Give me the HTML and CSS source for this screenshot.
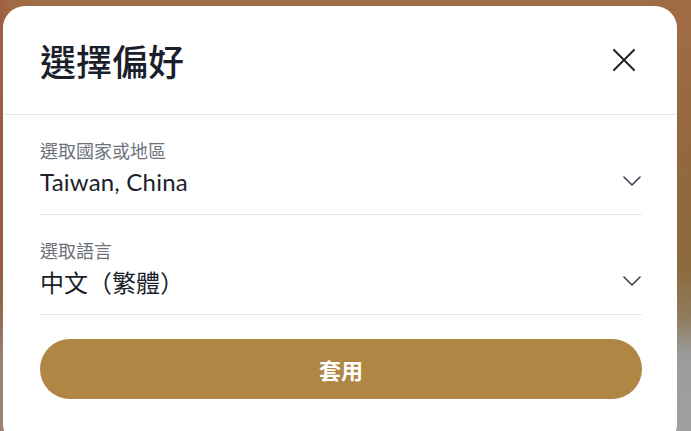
FILE: index.html
```html
<!DOCTYPE html>
<html lang="zh-Hant">
<head>
<meta charset="utf-8">
<title>選擇偏好</title>
<link rel="stylesheet" href="styles.css">
</head>
<body>
<div class="backdrop">
  <div class="modal">
    <div class="modal-header">
      <h1 class="modal-title">選擇偏好</h1>
      <button class="close-btn" aria-label="關閉">
        <svg width="22" height="22" viewBox="0 0 22 22"><path d="M1 1 L21 21 M21 1 L1 21" stroke="#1f2430" stroke-width="2" stroke-linecap="round" fill="none"/></svg>
      </button>
    </div>
    <div class="modal-body">
      <div class="field">
        <div class="field-label">選取國家或地區</div>
        <div class="field-row">
          <span class="field-value latin">Taiwan, China</span>
          <svg class="chevron" width="18" height="10" viewBox="0 0 18 10"><path d="M1 1 L9 9 L17 1" stroke="#3a3f4a" stroke-width="1.6" stroke-linecap="round" stroke-linejoin="round" fill="none"/></svg>
        </div>
      </div>
      <div class="field">
        <div class="field-label">選取語言</div>
        <div class="field-row">
          <span class="field-value">中文（繁體）</span>
          <svg class="chevron" width="18" height="10" viewBox="0 0 18 10"><path d="M1 1 L9 9 L17 1" stroke="#3a3f4a" stroke-width="1.6" stroke-linecap="round" stroke-linejoin="round" fill="none"/></svg>
        </div>
      </div>
      <button class="apply-btn">套用</button>
    </div>
  </div>
</div>
</body>
</html>
```
FILE: styles.css
```css
html, body {
  margin: 0;
  padding: 0;
  height: 100%;
  overflow: hidden;
}
body {
  font-family: Lato, "Noto Sans CJK TC", sans-serif;
  background:
    linear-gradient(to right, rgba(160,80,60,0.45) 0px, rgba(160,80,60,0) 10px),
    linear-gradient(to bottom, #a06c46 0%, #96683f 30%, #8c6a3e 62%, #8f7d5e 74%, #9b9b9b 82%, #a0a0a0 100%);
}
.backdrop {
  padding: 6px 14px 0 3px;
}
.modal {
  width: 674px;
  height: 440px;
  background: #ffffff;
  border-radius: 22px;
}
.modal-header {
  height: 108px;
  display: flex;
  align-items: center;
  justify-content: space-between;
  padding: 0 42px 0 37px;
  border-bottom: 1px solid #e6e7ea;
}
.modal-title {
  margin: 0;
  font-size: 36px;
  font-weight: 500;
  color: #1a1f2b;
  font-family: "Noto Sans CJK TC", sans-serif;
}
.close-btn {
  border: 0;
  background: none;
  padding: 0;
  width: 22px;
  height: 22px;
  display: flex;
  cursor: pointer;
}
.modal-body {
  padding: 0 35px 0 37px;
}
.field {
  padding: 24px 0 13px;
  border-bottom: 1px solid #e6e7ea;
}
.field-label {
  font-size: 18px;
  line-height: 22px;
  color: #6e727b;
  font-family: "Noto Sans CJK TC", sans-serif;
}
.field-row {
  height: 40px;
  display: flex;
  align-items: center;
  justify-content: space-between;
}
.field-value {
  font-size: 24px;
  color: #1a1f2b;
}
.field-value.latin {
  letter-spacing: 0.2px;
}
.chevron {
  margin-right: 1px;
}
.apply-btn {
  display: block;
  width: 100%;
  height: 60px;
  margin-top: 24px;
  border: 0;
  border-radius: 30px;
  background: #b08644;
  color: #ffffff;
  font-family: "Noto Sans CJK TC", sans-serif;
  font-size: 22px;
  font-weight: 700;
  cursor: pointer;
}
```
